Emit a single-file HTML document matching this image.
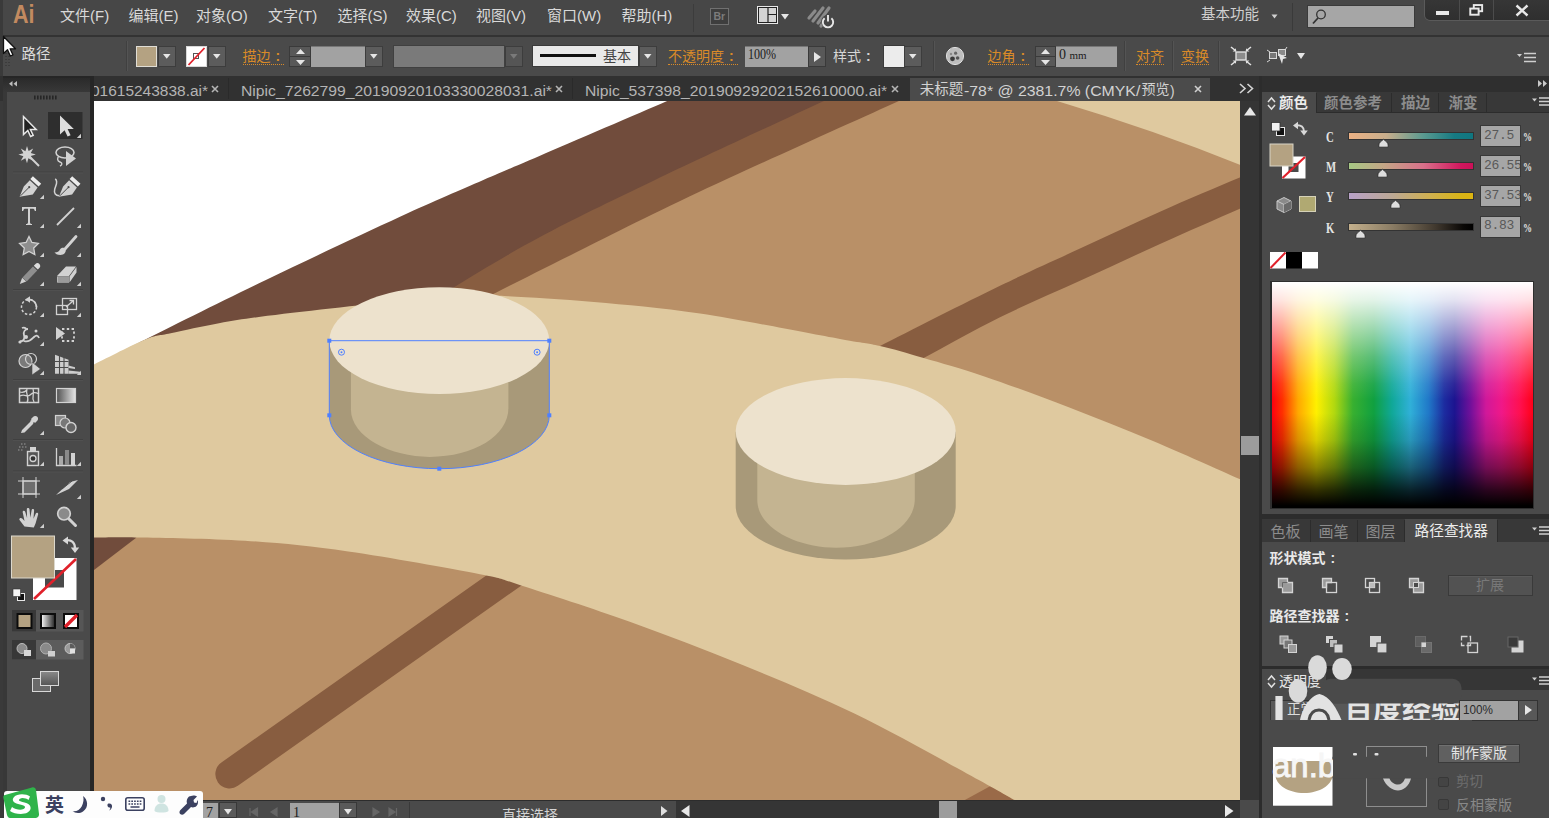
<!DOCTYPE html>
<html lang="zh"><head><meta charset="utf-8"><title>Adobe Illustrator</title>
<style>
html,body{margin:0;padding:0}
body{width:1549px;height:818px;overflow:hidden;position:relative;background:#474747;font-family:"Liberation Sans","Noto Sans CJK SC",sans-serif;}
.a{position:absolute}
.t{position:absolute;white-space:nowrap;display:flex;align-items:center;line-height:1;font-family:"Liberation Sans","Noto Sans CJK SC",sans-serif}
.t svg{display:block;flex:none}
svg{overflow:visible}

</style></head>
<body>
<svg class="a" style="left:94px;top:101px;overflow:hidden" width="1146" height="699" viewBox="94 101 1146 699">
<rect x="94" y="101" width="1146" height="699" fill="#fff"/>
<path fill="#714c3c" d="M120.0 352.5C124.2 350.4 120.6 351.8 144.9 339.7C169.2 327.6 223.4 300.5 265.9 280.0C308.4 259.5 363.8 233.5 400.0 216.8C436.2 200.1 460.0 190.2 483.3 180.0C506.6 169.8 509.2 168.9 540.0 155.7C570.8 142.5 641.1 112.2 667.8 100.7C694.5 89.2 694.6 89.3 700.0 87.0L1300 80L1300 900L40 900L40 392Z"/>
<path fill="#885d40" d="M430.0 303.0C434.3 300.2 437.7 297.0 456.0 286.0C474.3 275.0 506.8 254.7 540.0 237.0C573.2 219.3 607.7 202.7 655.0 180.0C702.3 157.3 789.8 116.8 824.0 101.0C858.2 85.2 854.0 87.7 860.0 85.0L1300 80L1300 900L300 900Z"/>
<path fill="#b99067" d="M470.0 306.0C474.5 303.7 480.0 300.8 496.8 292.3C513.6 283.8 537.1 271.8 571.0 255.0C604.9 238.2 645.2 217.3 700.0 191.6C754.8 165.9 860.3 118.5 899.5 100.7C938.7 82.9 929.1 87.6 935.0 85.0L1300 80L1300 900L40 900L40 500L470 500Z"/>
<path fill="#714c3c" d="M80 530L136.5 537.4L93.5 570.4L80 580Z"/>
<path fill="#9a6a48" d="M963 801L991 785.8L1030 810L963 810Z"/>
<path fill="#dfc99f" d="M1056 100.7Q1153.7 130 1239.8 164.7L1300 190L1300 80L1056 80Z"/>
<path fill="#885d40" d="M1290.0 156.5C1281.6 160.0 1261.5 168.4 1239.8 177.6C1218.1 186.8 1186.6 199.9 1160.0 211.7C1133.4 223.5 1106.7 236.2 1080.0 248.6C1053.3 260.9 1033.3 269.6 1000.0 285.8C966.7 302.0 906.7 332.5 880.0 346.0C853.3 359.5 846.7 363.5 840.0 367.0L860.0 392.0C870.6 386.3 900.4 370.4 923.7 358.0C947.0 345.6 974.0 330.2 1000.0 317.3C1026.0 304.4 1053.3 293.0 1080.0 280.8C1106.7 268.6 1133.4 256.0 1160.0 244.0C1186.6 232.0 1218.1 218.2 1239.8 208.7C1261.5 199.2 1281.6 190.6 1290.0 187.0Z"/>
<path stroke="#885d40" stroke-width="28.5" stroke-linecap="round" fill="none" d="M229.6 774.2L525 565.5"/>
<path fill="#dfc99f" d="M60.0 382.0C65.6 379.1 79.3 371.8 93.5 364.7C107.7 357.6 132.0 344.9 144.9 339.7C157.8 334.5 158.3 336.0 170.7 333.3C183.0 330.6 202.9 326.2 219.0 323.3C235.1 320.4 247.3 318.5 267.5 315.8C287.7 313.1 314.6 310.2 340.0 307.4C365.4 304.6 398.3 300.9 420.0 299.0C441.7 297.1 455.3 296.5 470.0 296.0C484.7 295.5 487.3 295.2 508.0 296.2C528.7 297.2 562.0 299.1 594.0 302.0C626.0 304.9 659.0 307.4 700.0 313.6C741.0 319.8 810.0 333.6 840.0 339.0C870.0 344.4 866.0 342.8 880.0 346.0C894.0 349.2 906.3 352.9 923.7 358.0C941.1 363.1 960.2 368.2 984.4 376.4C1008.6 384.6 1040.6 396.5 1068.7 407.3C1096.8 418.1 1124.5 429.1 1153.0 441.0C1181.5 452.9 1218.3 469.7 1239.5 479.0C1260.7 488.3 1273.2 494.0 1280.0 497.0L1300 510L1300 830L1050.0 820.0C1044.2 816.7 1029.3 808.2 1015.4 800.4C1001.5 792.6 993.6 787.9 966.8 773.4C940.0 758.9 891.9 731.6 854.4 713.5C816.9 695.4 779.4 680.1 742.0 664.8C704.6 649.5 666.6 635.0 629.8 621.8C593.0 608.6 546.2 593.4 521.2 585.5C496.2 577.6 508.8 579.9 480.0 574.2C451.2 568.5 387.4 557.1 348.2 551.5C309.0 545.9 280.3 543.1 245.0 540.7C209.7 538.4 161.8 537.9 136.5 537.4C111.2 536.9 106.2 537.5 93.5 537.6C80.8 537.7 65.6 537.9 60.0 538.0Z"/>
<path fill="#a89979" d="M329.3 340.7L329.3 415.3A110.0 53.4 0 0 0 549.3 415.3L549.3 340.7Z"/><path fill="#c4b491" d="M350.9 340.7L350.9 409.3C350.9 437.3 390.9 456.9 429.6 456.9C474.4 456.9 508.4 435.3 508.4 408.3L508.4 340.7Z"/><ellipse cx="439.3" cy="340.7" rx="110.0" ry="53.4" fill="#ede2cd"/><path fill="none" stroke="#4f80ff" stroke-width="1" d="M329.3 340.7L329.3 415.3A110.0 53.4 0 0 0 549.3 415.3L549.3 340.7Z"/><rect x="327.3" y="338.7" width="4" height="4" fill="#4f80ff"/><rect x="547.3" y="338.7" width="4" height="4" fill="#4f80ff"/><rect x="327.3" y="413.3" width="4" height="4" fill="#4f80ff"/><rect x="547.3" y="413.3" width="4" height="4" fill="#4f80ff"/><rect x="437.3" y="466.7" width="4" height="4" fill="#4f80ff"/><circle cx="341.5" cy="352.2" r="3" fill="none" stroke="#4f80ff" stroke-width="1"/><circle cx="341.5" cy="352.2" r="1" fill="#4f80ff"/><circle cx="537.1" cy="352.2" r="3" fill="none" stroke="#4f80ff" stroke-width="1"/><circle cx="537.1" cy="352.2" r="1" fill="#4f80ff"/>
<path fill="#a89979" d="M735.7 431.5L735.7 506.1A110.0 53.4 0 0 0 955.7 506.1L955.7 431.5Z"/><path fill="#c4b491" d="M757.3 431.5L757.3 500.1C757.3 528.1 797.3 547.7 836.1 547.7C880.8 547.7 914.8 526.1 914.8 499.1L914.8 431.5Z"/><ellipse cx="845.7" cy="431.5" rx="110.0" ry="53.4" fill="#ede2cd"/>
</svg>
<div class="a" style="left:0;top:0;width:1549px;height:35px;background:#474747"></div>
<div class="a" style="left:0;top:35px;width:1549px;height:1.500px;background:#333"></div><div class="a" style="left:0;top:36.500px;width:1549px;height:1px;background:#525252"></div>
<div class="a" style="left:0;top:37px;width:1549px;height:39px;background:#4a4a4a"></div>
<div class="a" style="left:0;top:0;width:3px;height:818px;background:#3a3a3a"></div>
<div class="a" style="left:13px;top:0px;font-size:25px;font-weight:bold;color:#c28a60;line-height:29px;transform:scaleX(.86);transform-origin:0 0;letter-spacing:0">Ai</div>
<div class="t" style="left:60px;top:6.2px;font-size:15px;height:18.0px;color:#d9d9d9;"><span>文件</span><span>(F)</span></div>
<div class="t" style="left:128.5px;top:6.2px;font-size:15px;height:18.0px;color:#d9d9d9;"><span>编辑</span><span>(E)</span></div>
<div class="t" style="left:196px;top:6.2px;font-size:15px;height:18.0px;color:#d9d9d9;"><span>对象</span><span>(O)</span></div>
<div class="t" style="left:268px;top:6.2px;font-size:15px;height:18.0px;color:#d9d9d9;"><span>文字</span><span>(T)</span></div>
<div class="t" style="left:337.5px;top:6.2px;font-size:15px;height:18.0px;color:#d9d9d9;"><span>选择</span><span>(S)</span></div>
<div class="t" style="left:406px;top:6.2px;font-size:15px;height:18.0px;color:#d9d9d9;"><span>效果</span><span>(C)</span></div>
<div class="t" style="left:476px;top:6.2px;font-size:15px;height:18.0px;color:#d9d9d9;"><span>视图</span><span>(V)</span></div>
<div class="t" style="left:547px;top:6.2px;font-size:15px;height:18.0px;color:#d9d9d9;"><span>窗口</span><span>(W)</span></div>
<div class="t" style="left:621.5px;top:6.2px;font-size:15px;height:18.0px;color:#d9d9d9;"><span>帮助</span><span>(H)</span></div>
<div class="a" style="left:693px;top:4px;width:1px;height:28px;background:#3c3c3c"></div>
<div class="a" style="left:709.500px;top:7.500px;width:19.500px;height:17px;border:1px solid #707070;background:#3e3e3e;box-sizing:border-box;color:#7c7c7c;font-size:10.500px;font-weight:bold;line-height:15px;text-align:center">Br</div>
<svg class="a" style="left:757px;top:6px" width="34" height="19" viewBox="0 0 34 19"><rect x="0.5" y="0.5" width="20" height="17" fill="#d4d4d4" stroke="#e8e8e8"/><rect x="1.5" y="1.5" width="18" height="15" fill="none" stroke="#222"/><path d="M11 2V16M11 8.5H19" stroke="#222" stroke-width="1.2"/><path d="M24 8h8l-4 5.5z" fill="#e6e6e6"/></svg>
<svg class="a" style="left:807px;top:5px" width="30" height="24" viewBox="0 0 30 24"><path d="M2 13L8 6M6 16L16 3M11 18L22 3M14 21L18 14" stroke="#8a8a8a" stroke-width="3.2" stroke-linecap="round"/><circle cx="21" cy="16.5" r="6.8" fill="#474747"/><path d="M17.6 13.2A5.2 5.2 0 1 0 24.4 13.2" fill="none" stroke="#e8e8e8" stroke-width="1.9"/><path d="M21 10V16.5" stroke="#e8e8e8" stroke-width="1.9"/></svg>
<div class="t" style="left:1201px;top:6px;font-size:14.5px;height:17.4px;color:#d0d0d0;"><span>基本功能</span></div>
<svg class="a" style="left:1271px;top:14px" width="8" height="6"><path d="M0.5 0.5h6l-3 4z" fill="#d0d0d0"/></svg>
<div class="a" style="left:1292px;top:3px;width:1px;height:28px;background:#3a3a3a"></div>
<div class="a" style="left:1308px;top:6px;width:106px;height:21px;background:#a6a6a6;box-shadow:0 0 0 1px #3a3a3a"></div>
<svg class="a" style="left:1311px;top:8px" width="18" height="18" viewBox="0 0 18 18"><circle cx="10" cy="6.5" r="4.3" fill="none" stroke="#333" stroke-width="1.3"/><path d="M7 10L2 15.5" stroke="#333" stroke-width="1.8"/></svg>
<div class="a" style="left:1425px;top:0;width:124px;height:20px;background:linear-gradient(180deg,#363636,#2f2f2f);border-radius:0 0 0 5px;box-shadow:0 1px 0 #5a5a5a,-1px 0 0 #5a5a5a"></div>
<div class="a" style="left:1459px;top:0;width:1px;height:20px;background:#4c4c4c"></div><div class="a" style="left:1493px;top:0;width:1px;height:20px;background:#4c4c4c"></div>
<div class="a" style="left:1436px;top:11px;width:13px;height:4px;background:#e8e8e8"></div>
<svg class="a" style="left:1468.800px;top:4px" width="14.500" height="12.300" viewBox="0 0 16 14"><rect x="5.2" y="1.2" width="9.5" height="7" fill="none" stroke="#e8e8e8" stroke-width="2.2"/><rect x="1.2" y="5.2" width="9.5" height="7" fill="#303030" stroke="#e8e8e8" stroke-width="2.2"/></svg>
<svg class="a" style="left:1515px;top:4px" width="14" height="13" viewBox="0 0 14 13"><path d="M1.5 1.5L12.5 11.5M12.5 1.5L1.5 11.5" stroke="#e8e8e8" stroke-width="2.4"/></svg>
<svg class="a" style="left:5px;top:44px" width="6" height="24"><path d="M1 0v24M4 0v24" stroke="#2f2f2f" stroke-width="1" stroke-dasharray="1 2"/></svg>
<div class="t" style="left:21.5px;top:45.5px;font-size:14.5px;height:17.4px;color:#dcdcdc;"><span>路径</span></div>
<div class="a" style="left:126px;top:41px;width:1px;height:30px;background:#404040"></div><div class="a" style="left:127px;top:41px;width:1px;height:30px;background:#545454"></div>
<div class="a" style="left:136px;top:46px;width:21px;height:21px;background:#b4a282;box-sizing:border-box;border:1px solid #e0ddd5"></div>
<div class="a" style="left:157.5px;top:46px;width:18px;height:21px;background:#5c5c5c;box-shadow:inset 0 0 0 1px #3d3d3d"></div><svg class="a" style="left:162.75px;top:54.2px" width="8" height="5"><path d="M0 0h7.500l-3.750 4.800z" fill="#e6e6e6"/></svg>
<svg class="a" style="left:186px;top:46px" width="21" height="21" viewBox="0 0 21 21"><rect width="21" height="21" fill="#fff"/><rect x="7.5" y="7.5" width="5" height="5" fill="none" stroke="#555"/><path d="M2.5 19L18.5 2" stroke="#e0202a" stroke-width="1.8"/><rect x=".5" y=".5" width="20" height="20" fill="none" stroke="#d8d8d8"/></svg>
<div class="a" style="left:207.5px;top:46px;width:18px;height:21px;background:#5c5c5c;box-shadow:inset 0 0 0 1px #3d3d3d"></div><svg class="a" style="left:212.75px;top:54.2px" width="8" height="5"><path d="M0 0h7.500l-3.750 4.800z" fill="#e6e6e6"/></svg>
<div class="t" style="left:242.5px;top:47.5px;font-size:14px;height:16.8px;color:#d98a28;border-bottom:1px dotted #d98a28;"><span>描边</span><span style="margin-left:4.9px;margin-right:4.2px;font-weight:bold">:</span></div>
<div class="a" style="left:289px;top:46px;width:22px;height:21px;background:#585858;box-shadow:inset 0 0 0 1px #3a3a3a"></div><div class="a" style="left:289px;top:56.0px;width:22px;height:1px;background:#3a3a3a"></div><svg class="a" style="left:295.5px;top:48.5px" width="9" height="16"><path d="M0 5h9l-4.5-5zM0 11h9l-4.5 5z" fill="#e6e6e6"/></svg>
<div class="a" style="left:311px;top:46px;width:54px;height:21px;background:#a2a2a2;box-shadow:inset 0 1px 0 #777"></div>
<div class="a" style="left:365px;top:46px;width:18px;height:21px;background:#5c5c5c;box-shadow:inset 0 0 0 1px #3d3d3d"></div><svg class="a" style="left:370.25px;top:54.2px" width="8" height="5"><path d="M0 0h7.500l-3.750 4.800z" fill="#e6e6e6"/></svg>
<div class="a" style="left:394px;top:46px;width:110px;height:21px;background:#7a7a7a;box-shadow:0 0 0 1px #404040"></div>
<div class="a" style="left:504.5px;top:46px;width:18px;height:21px;background:#555;box-shadow:inset 0 0 0 1px #3d3d3d"></div><svg class="a" style="left:509.75px;top:54.2px" width="8" height="5"><path d="M0 0h7.500l-3.750 4.800z" fill="#7a7a7a"/></svg>
<div class="a" style="left:533px;top:46px;width:105px;height:20px;background:#e9e9e9;box-shadow:0 0 0 1px #3a3a3a"></div>
<div class="a" style="left:540px;top:54px;width:56px;height:3px;background:#111"></div>
<div class="t" style="left:603px;top:47.5px;font-size:14px;height:16.8px;color:#444;"><span>基本</span></div>
<div class="a" style="left:639px;top:46px;width:18px;height:21px;background:#5c5c5c;box-shadow:inset 0 0 0 1px #3d3d3d"></div><svg class="a" style="left:644.25px;top:54.2px" width="8" height="5"><path d="M0 0h7.500l-3.750 4.800z" fill="#e6e6e6"/></svg>
<div class="t" style="left:668px;top:47.5px;font-size:14px;height:16.8px;color:#d98a28;border-bottom:1px dotted #d98a28;"><span>不透明度</span><span style="margin-left:4.9px;margin-right:4.2px;font-weight:bold">:</span></div>
<div class="a" style="left:745px;top:46px;width:63px;height:21px;background:#a2a2a2;box-shadow:inset 0 1px 0 #777"></div>
<div class="a" style="left:748px;top:46.5px;font-size:14px;color:#1c1c1c;line-height:16px;font-family:'Liberation Serif',serif;transform:scaleX(.86);transform-origin:0 0">100%</div>
<div class="a" style="left:808px;top:46px;width:18px;height:21px;background:#585858;box-shadow:inset 0 0 0 1px #3a3a3a"></div><svg class="a" style="left:814px;top:52px" width="7" height="10"><path d="M0 0v10l7-5z" fill="#e6e6e6"/></svg>
<div class="t" style="left:833px;top:47.5px;font-size:14px;height:16.8px;color:#d6d6d6;"><span>样式</span><span style="margin-left:4.9px;margin-right:4.2px;font-weight:bold">:</span></div>
<div class="a" style="left:883.5px;top:46px;width:20px;height:21px;background:#ececec;box-shadow:0 0 0 1px #3a3a3a"></div>
<div class="a" style="left:904px;top:46px;width:18px;height:21px;background:#5c5c5c;box-shadow:inset 0 0 0 1px #3d3d3d"></div><svg class="a" style="left:909.25px;top:54.2px" width="8" height="5"><path d="M0 0h7.500l-3.750 4.800z" fill="#e6e6e6"/></svg>
<div class="a" style="left:933px;top:41px;width:1px;height:30px;background:#404040"></div><div class="a" style="left:934px;top:41px;width:1px;height:30px;background:#545454"></div>
<svg class="a" style="left:945px;top:46px" width="20" height="20" viewBox="0 0 20 20"><circle cx="10" cy="10" r="8.6" fill="#bdbdbd" stroke="#e0e0e0" stroke-width="1"/><circle cx="7.5" cy="12.8" r="2.4" fill="#3a3a3a"/><circle cx="12.6" cy="12" r="1.8" fill="#555"/><circle cx="10.6" cy="7.2" r="1.6" fill="#666"/><circle cx="6" cy="8" r="1.2" fill="#888"/></svg>
<div class="t" style="left:987.5px;top:47.5px;font-size:14px;height:16.8px;color:#d98a28;border-bottom:1px dotted #d98a28;"><span>边角</span><span style="margin-left:4.9px;margin-right:4.2px;font-weight:bold">:</span></div>
<div class="a" style="left:1035px;top:46px;width:20.5px;height:21px;background:#585858;box-shadow:inset 0 0 0 1px #3a3a3a"></div><div class="a" style="left:1035px;top:56.0px;width:20.5px;height:1px;background:#3a3a3a"></div><svg class="a" style="left:1040.75px;top:48.5px" width="9" height="16"><path d="M0 5h9l-4.5-5zM0 11h9l-4.5 5z" fill="#e6e6e6"/></svg>
<div class="a" style="left:1055.5px;top:46px;width:61px;height:21px;background:#a2a2a2;box-shadow:inset 0 1px 0 #777"></div>
<div class="a" style="left:1059px;top:46.5px;font-size:14px;color:#1c1c1c;line-height:16px;font-family:'Liberation Serif',serif">0 <span style="font-size:11px">mm</span></div>
<div class="a" style="left:1124px;top:41px;width:1px;height:30px;background:#404040"></div><div class="a" style="left:1125px;top:41px;width:1px;height:30px;background:#545454"></div>
<div class="t" style="left:1136px;top:47.5px;font-size:14px;height:16.8px;color:#d98a28;border-bottom:1px dotted #d98a28;"><span>对齐</span></div>
<div class="a" style="left:1172px;top:41px;width:1px;height:30px;background:#404040"></div><div class="a" style="left:1173px;top:41px;width:1px;height:30px;background:#545454"></div>
<div class="t" style="left:1181px;top:47.5px;font-size:14px;height:16.8px;color:#d98a28;border-bottom:1px dotted #d98a28;"><span>变换</span></div>
<div class="a" style="left:1218px;top:41px;width:1px;height:30px;background:#404040"></div><div class="a" style="left:1219px;top:41px;width:1px;height:30px;background:#545454"></div>
<svg class="a" style="left:1230px;top:46px" width="22" height="20" viewBox="0 0 22 20"><rect x="6" y="6" width="10" height="8" fill="#8c8c8c" stroke="#e2e2e2" stroke-width="1.4"/><path d="M1 1l5 4M21 1l-5 4M1 19l5-4M21 19l-5-4" stroke="#e2e2e2" stroke-width="1.6"/><path d="M6 2.2v3.3H2.6zM16 2.2v3.3h3.4zM6 17.8v-3.3H2.6zM16 17.8v-3.3h3.4z" fill="#e2e2e2"/></svg>
<svg class="a" style="left:1267px;top:46px" width="40" height="20" viewBox="0 0 40 20"><rect x="2.5" y="6.5" width="7" height="6" fill="#777" stroke="#d8d8d8"/><rect x="11.5" y="3.5" width="7" height="6" fill="#8a8a8a" stroke="#d8d8d8"/><path d="M11 7l9 5-4 1-1 5z" fill="#e6e6e6"/><path d="M0 4l3 2M20 1l-2 3M0 16l3-2" stroke="#d8d8d8"/><path d="M30 7h8l-4 6z" fill="#e6e6e6"/></svg>
<svg class="a" style="left:1517px;top:52px" width="19" height="11" viewBox="0 0 19 11"><path d="M0 2h5l-2.500 3z" fill="#cfcfcf"/><path d="M7 1.500h12M7 5.500h12M7 9.500h12" stroke="#cfcfcf" stroke-width="1.600"/></svg>
<div class="a" style="left:0;top:76px;width:1549px;height:25px;background:#313131"></div>
<div class="a" style="left:94px;top:76px;width:130px;height:25px;overflow:hidden"><svg class="a" style="left:-3.5px;top:3.8px;" width="117" height="20.15"><text x="0" y="15.5" font-family="'Liberation Sans',sans-serif" font-size="15.5" font-weight="normal" fill="#b4b4b4" textLength="117" lengthAdjust="spacingAndGlyphs">01615243838.ai*</text></svg></div>
<svg class="a" style="left:211px;top:85px" width="8" height="8"><path d="M1 1l6 6M7 1l-6 6" stroke="#b4b4b4" stroke-width="1.600"/></svg>
<div class="a" style="left:228px;top:78px;width:1px;height:21px;background:#2a2a2a"></div>
<svg class="a" style="left:241px;top:79.8px;" width="311" height="20.15"><text x="0" y="15.5" font-family="'Liberation Sans',sans-serif" font-size="15.5" font-weight="normal" fill="#b4b4b4" textLength="311" lengthAdjust="spacingAndGlyphs">Nipic_7262799_20190920103330028031.ai*</text></svg>
<svg class="a" style="left:555px;top:85px" width="8" height="8"><path d="M1 1l6 6M7 1l-6 6" stroke="#b4b4b4" stroke-width="1.600"/></svg>
<div class="a" style="left:572px;top:78px;width:1px;height:21px;background:#2a2a2a"></div>
<svg class="a" style="left:585px;top:79.8px;" width="302" height="20.15"><text x="0" y="15.5" font-family="'Liberation Sans',sans-serif" font-size="15.5" font-weight="normal" fill="#b4b4b4" textLength="302" lengthAdjust="spacingAndGlyphs">Nipic_537398_20190929202152610000.ai*</text></svg>
<svg class="a" style="left:891px;top:85px" width="8" height="8"><path d="M1 1l6 6M7 1l-6 6" stroke="#b4b4b4" stroke-width="1.600"/></svg>
<div class="a" style="left:910px;top:78px;width:300px;height:23px;background:#4b4b4b"></div>
<div class="t" style="left:919.7px;top:80.8px;font-size:14.5px;height:17.4px;color:#d2d2d2;"><span>未标题</span></div>
<svg class="a" style="left:964.2px;top:79.8px;" width="176.3" height="20.15"><text x="0" y="15.5" font-family="'Liberation Sans',sans-serif" font-size="15.5" font-weight="normal" fill="#d2d2d2" textLength="176.3" lengthAdjust="spacingAndGlyphs">-78* @ 2381.7% (CMYK/</text></svg>
<div class="t" style="left:1141.5px;top:80.8px;font-size:14px;height:16.8px;color:#d2d2d2;"><span>预览</span></div>
<svg class="a" style="left:1169.8px;top:79.8px;" width="4.6" height="20.15"><text x="0" y="15.5" font-family="'Liberation Sans',sans-serif" font-size="15.5" font-weight="normal" fill="#d2d2d2" textLength="4.6" lengthAdjust="spacingAndGlyphs">)</text></svg>
<svg class="a" style="left:1193.5px;top:85px" width="8" height="8"><path d="M1 1l6 6M7 1l-6 6" stroke="#d0d0d0" stroke-width="1.600"/></svg>
<svg class="a" style="left:1238.500px;top:83px" width="15" height="11" viewBox="0 0 15 11"><path d="M1 1l5 4.500-5 4.500M8.500 1l5 4.500-5 4.500" fill="none" stroke="#d4d4d4" stroke-width="1.600"/></svg>
<svg class="a" style="left:2px;top:35px" width="14" height="23" viewBox="0 0 14 23"><path d="M1.500 1.500v17l4-3.800 2.800 6.300 2.600-1.200-2.800-6h5.400z" fill="#fff" stroke="#111" stroke-width="1.300" stroke-linejoin="round"/></svg>
<div class="a" style="left:3px;top:76px;width:91px;height:742px;background:#262626"></div>
<div class="a" style="left:3px;top:91px;width:3.500px;height:727px;background:#383838"></div>
<div class="a" style="left:6.500px;top:91px;width:83px;height:727px;background:#4a4a4a"></div>
<div class="a" style="left:3px;top:78px;width:87px;height:14px;background:linear-gradient(180deg,#2a2a2a,#383838)"></div>
<svg class="a" style="left:8.500px;top:81px" width="9" height="6"><path d="M3.500 0v5.500L0 2.750zM8 0v5.500L4.500 2.750z" fill="#bdbdbd"/></svg>
<svg class="a" style="left:34px;top:95px" width="24" height="5"><path d="M0 2.500h24" stroke="#262626" stroke-width="4" stroke-dasharray="1.600 1.400"/></svg>
<svg class="a" style="left:0;top:100px" width="94" height="600" viewBox="0 100 94 600"><path d="M13 172H83" stroke="#404040" stroke-width="1"/><path d="M13 173H83" stroke="#505050" stroke-width="1"/><path d="M13 289.500H83" stroke="#404040" stroke-width="1"/><path d="M13 290.500H83" stroke="#505050" stroke-width="1"/><path d="M13 379.500H83" stroke="#404040" stroke-width="1"/><path d="M13 380.500H83" stroke="#505050" stroke-width="1"/><path d="M13 439.500H83" stroke="#404040" stroke-width="1"/><path d="M13 440.500H83" stroke="#505050" stroke-width="1"/><path d="M13 471H83" stroke="#404040" stroke-width="1"/><path d="M13 472H83" stroke="#505050" stroke-width="1"/><rect x="48" y="112" width="34.500" height="27" fill="#2e2e2e"/><path d="M23.500 116.500v18l4.300-4 2.800 6 2.600-1.200-2.800-5.800h5.800z" fill="#222" stroke="#e8e8e8" stroke-width="1.500" stroke-linejoin="miter"/><path d="M60 115.500v19l4.600-4.200 3 6.300 3-1.400-3-6.200h6.200z" fill="#dcdcdc"/><path d="M81 138v-4.200h-0.0l-4.200 4.200z" fill="#cfcfcf"/><path d="M27 146l1.600 5 4.600-2.600-2.400 4.600 5 1.600-5 1.400 2.200 4.800-4.600-2.600-1.400 5-1.600-5-4.600 2.600 2.600-4.600-5-1.600 5-1.400-2.600-4.800 4.600 2.800z" fill="#d2d2d2"/><path d="M30 157l9 9" stroke="#d2d2d2" stroke-width="2"/><ellipse cx="65" cy="152.500" rx="9" ry="5.500" fill="none" stroke="#d2d2d2" stroke-width="1.600"/><path d="M59 156c-2 2-2 5 1 6s2 3 0 4" fill="none" stroke="#d2d2d2" stroke-width="1.400"/><path d="M66 151v15l10-7.500z" fill="#d2d2d2"/><g transform="translate(0 0)"><path d="M19.600 196.800L23.800 186.500 29.800 180.300 37.600 187.500 32.800 194.500z" fill="#d2d2d2"/><path d="M30.300 179.100l2.600-2.900 8.300 7.500-2.600 2.900z" fill="#ececec"/><path d="M20.600 195.800L28.600 187.800" stroke="#4a4a4a" stroke-width="1"/><circle cx="29.200" cy="187.200" r="1.100" fill="#4a4a4a"/></g><path d="M44 199v-4.200h-0.0l-4.200 4.200z" fill="#cfcfcf"/><path d="M55.200 178.800c3.500 2.500 .5 6.500-.5 10.500s1 6.500 4.500 6.500" fill="none" stroke="#d2d2d2" stroke-width="1.500"/><g transform="translate(39.3 0)"><path d="M19.600 196.800L23.800 186.500 29.800 180.300 37.600 187.500 32.800 194.500z" fill="#d2d2d2"/><path d="M30.300 179.100l2.600-2.900 8.300 7.500-2.600 2.900z" fill="#ececec"/><path d="M20.600 195.800L28.600 187.800" stroke="#4a4a4a" stroke-width="1"/><circle cx="29.200" cy="187.200" r="1.100" fill="#4a4a4a"/></g><path d="M22 207h14v4h-1.200c-.3-1.600-.8-2.200-2.600-2.200H30v13.400c0 1.400.5 1.600 2 1.800v1h-6v-1c1.500-.2 2-.4 2-1.800V208.800h-2.200c-1.800 0-2.300.6-2.600 2.200H22z" fill="#d2d2d2"/><path d="M44 228v-4.200h-0.0l-4.200 4.200z" fill="#cfcfcf"/><path d="M57 225l17-17" stroke="#d2d2d2" stroke-width="1.800"/><path d="M81 228v-4.200h-0.0l-4.200 4.200z" fill="#cfcfcf"/><path d="M29 236.500l2.900 6 6.500.9-4.700 4.600 1.100 6.500-5.800-3.100-5.800 3.100 1.100-6.500-4.700-4.600 6.500-.9z" fill="#8e8e8e" stroke="#d2d2d2" stroke-width="1.300"/><path d="M44 257v-4.200h-0.0l-4.200 4.200z" fill="#cfcfcf"/><path d="M76 236.500l-11 12.500" stroke="#d2d2d2" stroke-width="2.800" stroke-linecap="round"/><path d="M54.500 252.500c3 0 4.500-1 5.500-3s4.500-2.500 5.500 0-1.500 5.500-5 5.500-5-1.500-6-2.500z" fill="#d2d2d2"/><path d="M81 257v-4.200h-0.0l-4.200 4.200z" fill="#cfcfcf"/><path d="M22.500 277.500l10.500-11 4.200 4-10.500 11z" fill="#8e8e8e"/><path d="M33.800 265.700l1.700-1.800c1.100-1.100 2.800-1.100 3.900 0s1.100 2.700.1 3.900l-1.700 1.800z" fill="#dcdcdc"/><path d="M19.800 284l2.400-6.200 4 3.800z" fill="#d0d0d0"/><path d="M44 286v-4.200h-0.0l-4.200 4.200z" fill="#cfcfcf"/><path d="M57 276l9-9.500h10l-7 9.500zM57 276.500h12v6H57zM69.500 276.500l7-9.500v5.500l-7 10z" fill="#d2d2d2"/><path d="M57.500 277h11.500v5.500H57.500z" fill="#9a9a9a"/><path d="M81 286v-4.200h-0.0l-4.200 4.200z" fill="#cfcfcf"/><circle cx="29" cy="307" r="7.500" fill="none" stroke="#d2d2d2" stroke-width="1.500" stroke-dasharray="2.500 2"/><path d="M29 299.500a7.500 7.500 0 0 1 7.500 7.500" fill="none" stroke="#d2d2d2" stroke-width="1.600"/><path d="M25 299.500l5-3.300v6.600z" fill="#d2d2d2"/><path d="M44 317v-4.200h-0.0l-4.200 4.200z" fill="#cfcfcf"/><rect x="56.500" y="305.500" width="11" height="9" fill="none" stroke="#d2d2d2" stroke-width="1.300"/><rect x="62.500" y="298.500" width="14" height="11" fill="none" stroke="#d2d2d2" stroke-width="1.300"/><path d="M66 307l7-6M69.500 300.500h4v4" fill="none" stroke="#d2d2d2" stroke-width="1.300"/><path d="M81 317v-4.200h-0.0l-4.200 4.200z" fill="#cfcfcf"/><path d="M20 341c4 1 5-3 4-6s1-6 4-6M24 341c5 2 8-2 10-4s4-2 5 1M22 328c2-1 4 0 5 2" fill="none" stroke="#d2d2d2" stroke-width="1.800"/><circle cx="26" cy="337" r="2" fill="#d2d2d2"/><circle cx="20" cy="342" r="1.600" fill="#d2d2d2"/><circle cx="36" cy="331" r="1.500" fill="#d2d2d2"/><path d="M44 346v-4.200h-0.0l-4.200 4.200z" fill="#cfcfcf"/><rect x="62" y="329" width="12" height="12" fill="none" stroke="#d2d2d2" stroke-width="1.800" stroke-dasharray="2.400 2.400"/><path d="M56 327v13l9-6.500z" fill="#d2d2d2"/><circle cx="25.500" cy="361" r="6.500" fill="#7a7a7a" stroke="#d2d2d2" stroke-width="1.200"/><circle cx="31" cy="359" r="5.500" fill="none" stroke="#d2d2d2" stroke-width="1.200"/><path d="M32 362v13l8.500-6z" fill="#d2d2d2" stroke="#4a4a4a" stroke-width=".6"/><path d="M44 375v-4.200h-0.0l-4.200 4.200z" fill="#cfcfcf"/><path d="M55 354.700L68.500 359.700V373.800H55z" fill="#cdcdcd"/><path d="M59.500 355v19M64 357v17M55 361.500h13.500M55 367.500h13.500" stroke="#4a4a4a" stroke-width="1.100"/><path d="M68.500 365.500l6.500 1.800v1.700l-6.500-1zM68.500 370.500l11.500 1.300v2h-11.500z" fill="#cdcdcd"/><path d="M81 375v-4.200h-0.0l-4.200 4.200z" fill="#cfcfcf"/><rect x="19.500" y="388.500" width="19" height="14" fill="none" stroke="#d2d2d2" stroke-width="1.500"/><path d="M20 396c5-3 7 2 10-1s5-3 9-1M27 389c-2 5 3 8 0 14M33 389c2 4-2 8 1 13M20 392c3 1 5 0 7-2" fill="none" stroke="#d2d2d2" stroke-width="1.300"/><defs><linearGradient id="tg1" x1="0" x2="1"><stop offset="0" stop-color="#505050"/><stop offset="1" stop-color="#e6e6e6"/></linearGradient></defs><rect x="56.500" y="388.500" width="19" height="14" fill="url(#tg1)" stroke="#d2d2d2" stroke-width="1.200"/><path d="M21 433l1-3 9-9 2.500 2.500-9 9zM31 419l2-2c1-1.500 3.500-1.500 4.500 0s.5 3-.5 4l-2 2-1-1-1.500 1.500-2.500-2.500L31.500 420z" fill="#d2d2d2"/><path d="M44 435v-4.200h-0.0l-4.200 4.200z" fill="#cfcfcf"/><rect x="55.500" y="415.500" width="10" height="10" fill="#8a8a8a" stroke="#d2d2d2" stroke-width="1.200"/><circle cx="65" cy="423" r="5" fill="#777" stroke="#d2d2d2" stroke-width="1.200"/><circle cx="71" cy="427.500" r="5" fill="#666" stroke="#d2d2d2" stroke-width="1.400"/><rect x="27.500" y="451.500" width="11" height="14" fill="#555" stroke="#d2d2d2" stroke-width="1.400"/><circle cx="33" cy="458.500" r="3" fill="#333" stroke="#d2d2d2" stroke-width="1.300"/><rect x="30" y="447" width="6" height="4" fill="#d2d2d2"/><path d="M19 447h8M18 450h6M21 444h5" stroke="#9a9a9a" stroke-width="1.200" stroke-dasharray="1.500 1.500"/><path d="M44 466v-4.200h-0.0l-4.200 4.200z" fill="#cfcfcf"/><path d="M56.500 448v17.500h20" fill="none" stroke="#d2d2d2" stroke-width="1.300"/><rect x="59" y="456" width="4" height="9" fill="#aaa"/><rect x="65" y="450" width="4" height="15" fill="#8a8a8a"/><rect x="71" y="453" width="4" height="12" fill="#d2d2d2"/><path d="M81 466v-4.200h-0.0l-4.200 4.200z" fill="#cfcfcf"/><rect x="23" y="481" width="13" height="13" fill="#6e6e6e" stroke="#d2d2d2" stroke-width="1.200"/><path d="M23 477v21M36 477v21M18 481h22M18 494h22" stroke="#d2d2d2" stroke-width="1"/><path d="M56 495l14-13 8-2-9 9z" fill="#d2d2d2"/><path d="M62 489l10-8" stroke="#4a4a4a" stroke-width="1"/><path d="M81 499v-4.200h-0.0l-4.200 4.200z" fill="#cfcfcf"/><g transform="translate(0 5.500)"><path d="M24.500 521l-4.800-6.200c-1.300-1.700 1-3.300 2.500-1.800l2.300 2.400-1.800-8.600c-.4-1.700 1.900-2.300 2.500-.6l1.900 6.200-.3-8.600c0-1.800 2.500-1.800 2.700 0l.8 8.500 1.300-7.600c.3-1.700 2.600-1.400 2.500.4l-.6 8.200 2.300-5.200c.7-1.600 2.800-.7 2.300 1l-2.400 8.300c-.8 2.400-1.500 3.400-1.900 4.600z" fill="#d2d2d2"/></g><path d="M44 528v-4.200h-0.0l-4.200 4.200z" fill="#cfcfcf"/><circle cx="64" cy="513.700" r="6.300" fill="#8a8a8a" stroke="#d2d2d2" stroke-width="1.700"/><path d="M69 519l6.500 6.500" stroke="#d2d2d2" stroke-width="3" stroke-linecap="round"/></svg>
<svg class="a" style="left:0;top:530px" width="94" height="170" viewBox="0 530 94 170"><rect x="33" y="558" width="43.500" height="42" fill="#fff"/><rect x="45" y="570" width="19" height="17.500" fill="#4a4a4a"/><path d="M34 599L76 559" stroke="#e0202a" stroke-width="2.600"/><rect x="11.500" y="536" width="43" height="42" fill="#b4a282" stroke="#dcd8cc" stroke-width="1"/><path d="M66.500 540.200c5-.6 8.500 2.500 8.500 8" fill="none" stroke="#d8d8d8" stroke-width="2.200"/><path d="M62.500 540.500l5.500-4v8zM75 553l-4.200-5.500h8.400z" fill="#d8d8d8"/><rect x="17.500" y="593.500" width="7" height="7" fill="#111" stroke="#e8e8e8"/><rect x="13" y="589" width="7.500" height="7.500" fill="#f4f4f4" stroke="#333" stroke-width=".6"/><rect x="12" y="610" width="71.500" height="21.500" fill="#565656"/><rect x="12" y="610" width="24" height="21.500" fill="#383838"/><rect x="17.500" y="614" width="14" height="14" fill="#b4a282" stroke="#0c0c0c" stroke-width="2"/><defs><linearGradient id="tg2" x1="0" x2="1"><stop offset="0" stop-color="#fff"/><stop offset="1" stop-color="#222"/></linearGradient></defs><rect x="41" y="614" width="14" height="14" fill="url(#tg2)" stroke="#0c0c0c" stroke-width="2"/><rect x="64" y="614" width="14" height="14" fill="#fff" stroke="#0c0c0c" stroke-width="2"/><path d="M65 627L77 615" stroke="#e0202a" stroke-width="3.400"/><rect x="12" y="640" width="71.500" height="19.500" fill="#5c5c5c"/><rect x="12" y="640" width="24" height="19.500" fill="#383838"/><circle cx="22" cy="648.500" r="5" fill="#8a8a8a" stroke="#bdbdbd"/><rect x="24" y="650" width="7" height="6" fill="#d6d6d6"/><circle cx="46" cy="648.500" r="5.500" fill="#8a8a8a" stroke="#b0b0b0"/><rect x="48" y="651" width="7" height="5.500" fill="#cfcfcf"/><circle cx="70" cy="648.500" r="5" fill="#9a9a9a" stroke="#c4c4c4"/><path d="M70 648.500v-5a5 5 0 0 1 5 5z" fill="#5c5c5c"/><rect x="70" y="648.500" width="5" height="5" fill="#e0e0e0"/><rect x="32.500" y="678.500" width="18" height="13" fill="#6a6a6a" stroke="#d8d8d8"/><defs><linearGradient id="tg3" x1="0" x2="0" y1="0" y2="1"><stop offset="0" stop-color="#8a8a8a"/><stop offset="1" stop-color="#555"/></linearGradient></defs><rect x="40.500" y="671.500" width="18" height="14" fill="url(#tg3)" stroke="#d8d8d8"/></svg>
<div class="a" style="left:1240px;top:101px;width:19px;height:699px;background:#353535"></div>
<svg class="a" style="left:1244px;top:107px" width="12" height="9"><path d="M0 8.500h12L6 0z" fill="#e8e8e8"/></svg>
<div class="a" style="left:1241px;top:436px;width:18px;height:19px;background:#9c9c9c"></div>
<div class="a" style="left:1259px;top:76px;width:290px;height:742px;background:#2c2c2c"></div>
<div class="a" style="left:1262px;top:76px;width:287px;height:16px;background:#2f2f2f"></div>
<svg class="a" style="left:1538px;top:80px" width="11" height="8"><path d="M0 0v7l4-3.500zM5 0v7l4-3.500z" fill="#c8c8c8"/></svg>
<div class="a" style="left:1262px;top:92px;width:287px;height:422px;background:#4a4a4a"></div>
<div class="a" style="left:1316px;top:92px;width:233px;height:20px;background:#383838"></div>
<div class="a" style="left:1316px;top:93px;width:1px;height:19px;background:#2c2c2c"></div>
<div class="a" style="left:1391px;top:93px;width:1px;height:19px;background:#2c2c2c"></div>
<div class="a" style="left:1438px;top:93px;width:1px;height:19px;background:#2c2c2c"></div>
<div class="a" style="left:1486px;top:93px;width:1px;height:19px;background:#2c2c2c"></div>
<div class="a" style="left:1316px;top:112px;width:233px;height:1px;background:#2c2c2c"></div>
<svg class="a" style="left:1267px;top:97px" width="9" height="13"><path d="M1 5l3.500-4 3.500 4M1 8l3.500 4 3.500-4" fill="none" stroke="#e0e0e0" stroke-width="1.500"/></svg>
<div class="t" style="left:1279px;top:94.5px;font-size:14.5px;height:17.4px;color:#ececec;font-weight:bold;"><span>颜色</span></div>
<div class="t" style="left:1324px;top:94.5px;font-size:14.5px;height:17.4px;color:#8c8c8c;font-weight:bold;"><span>颜色参考</span></div>
<div class="t" style="left:1401px;top:94.5px;font-size:14.5px;height:17.4px;color:#8c8c8c;font-weight:bold;"><span>描边</span></div>
<div class="t" style="left:1448.5px;top:94.5px;font-size:14.5px;height:17.4px;color:#8c8c8c;font-weight:bold;"><span>渐变</span></div>
<svg class="a" style="left:1532px;top:97px" width="17" height="10" viewBox="0 0 17 10"><path d="M0 1.500h5l-2.500 3z" fill="#cfcfcf"/><path d="M7 1h10M7 4.500h10M7 8h10" stroke="#cfcfcf" stroke-width="1.500"/></svg>
<svg class="a" style="left:1270px;top:121px" width="40" height="16" viewBox="0 0 40 16"><rect x="6.500" y="6.500" width="8" height="8" fill="#111" stroke="#e8e8e8"/><rect x="1.500" y="1.500" width="8.500" height="8.500" fill="#f2f2f2" stroke="#333" stroke-width=".800"/><path d="M26.500 4.200c4.500-.5 7.500 2 7.500 6.500" fill="none" stroke="#d8d8d8" stroke-width="2"/><path d="M23 4.500l5-3.700v7.400zM34 14.500l-3.800-5h7.600z" fill="#d8d8d8"/></svg>
<svg class="a" style="left:1268px;top:142px" width="40" height="38" viewBox="1268 142 40 38"><rect x="1282" y="156.500" width="23.500" height="22" fill="#fff"/><rect x="1288.500" y="163" width="10" height="9" fill="#4a4a4a"/><path d="M1282.500 178L1305 157" stroke="#e0202a" stroke-width="2.200"/><rect x="1270" y="144" width="23" height="22" fill="#b4a282" stroke="#d8d4c6"/></svg>
<svg class="a" style="left:1276px;top:197px" width="16" height="16" viewBox="0 0 16 16"><path d="M8 .5l7 3.500v8l-7 3.500-7-3.500v-8z" fill="#8a8a8a" stroke="#c8c8c8"/><path d="M1 4l7 3.500 7-3.500M8 7.500v8" fill="none" stroke="#c8c8c8"/><path d="M8 7.500l7-3.500v8l-7 3.500z" fill="#6a6a6a"/></svg>
<div class="a" style="left:1299px;top:195.500px;width:17px;height:16.500px;background:#b0a972;box-sizing:border-box;border:1px solid #d6d2b8"></div>
<svg class="a" style="left:1270px;top:252px" width="48" height="17" viewBox="0 0 48 17"><rect width="16" height="16.500" fill="#fff"/><path d="M.5 16L15.500 .5" stroke="#e0202a" stroke-width="2"/><rect x="16" width="16" height="16.500" fill="#000"/><rect x="32" width="16" height="16.500" fill="#fff"/></svg>
<div class="a" style="left:1326px;top:129.2px;font-family:'Liberation Serif',serif;font-weight:bold;font-size:14.500px;line-height:16px;color:#e4e4e4;transform:scaleX(.74);transform-origin:0 0">C</div>
<div class="a" style="left:1349px;top:133.2px;width:123.500px;height:6px;background:linear-gradient(90deg,#ecb184,#c8ae8c 30%,#5a9a90 60%,#167a82 85%,#107680);box-shadow:0 0 0 1px #333"></div>
<svg class="a" style="left:1377.8px;top:139.4px" width="11" height="9" viewBox="0 0 11 9"><path d="M5.500 0.300C3.500 2 .8 3.500 .8 6v2.200h9.400V6c0-2.500-2.700-4-4.700-5.700z" fill="#dedede" stroke="#2a2a2a" stroke-width=".900"/></svg>
<div class="a" style="left:1481px;top:126.0px;width:39px;height:20px;background:#a6a6a6;box-shadow:0 0 0 1px #383838;overflow:hidden"><div class="a" style="left:3px;top:1.500px;font-family:'Liberation Mono',monospace;font-size:13px;line-height:16px;color:#585858;white-space:nowrap;letter-spacing:-.3px">27.5</div></div>
<div class="a" style="left:1523px;top:130.2px;font-family:'Liberation Serif',serif;font-weight:bold;font-size:12px;line-height:14px;color:#e0e0e0;transform:scaleX(.75);transform-origin:0 0">%</div>
<div class="a" style="left:1326px;top:159.2px;font-family:'Liberation Serif',serif;font-weight:bold;font-size:14.500px;line-height:16px;color:#e4e4e4;transform:scaleX(.74);transform-origin:0 0">M</div>
<div class="a" style="left:1349px;top:163.2px;width:123.500px;height:6px;background:linear-gradient(90deg,#a6c884,#c4a686 28%,#d8708a 60%,#d0185e 90%,#cc1058);box-shadow:0 0 0 1px #333"></div>
<svg class="a" style="left:1376.5px;top:169.4px" width="11" height="9" viewBox="0 0 11 9"><path d="M5.500 0.300C3.500 2 .8 3.500 .8 6v2.200h9.400V6c0-2.500-2.700-4-4.700-5.700z" fill="#dedede" stroke="#2a2a2a" stroke-width=".900"/></svg>
<div class="a" style="left:1481px;top:156.0px;width:39px;height:20px;background:#a6a6a6;box-shadow:0 0 0 1px #383838;overflow:hidden"><div class="a" style="left:3px;top:1.500px;font-family:'Liberation Mono',monospace;font-size:13px;line-height:16px;color:#585858;white-space:nowrap;letter-spacing:-.3px">26.55</div></div>
<div class="a" style="left:1523px;top:160.2px;font-family:'Liberation Serif',serif;font-weight:bold;font-size:12px;line-height:14px;color:#e0e0e0;transform:scaleX(.75);transform-origin:0 0">%</div>
<div class="a" style="left:1326px;top:189.4px;font-family:'Liberation Serif',serif;font-weight:bold;font-size:14.500px;line-height:16px;color:#e4e4e4;transform:scaleX(.74);transform-origin:0 0">Y</div>
<div class="a" style="left:1349px;top:193.4px;width:123.500px;height:6px;background:linear-gradient(90deg,#b8a2c8,#bca894 35%,#cfb050 65%,#d8b418 90%,#dcb410);box-shadow:0 0 0 1px #333"></div>
<svg class="a" style="left:1389.8px;top:199.6px" width="11" height="9" viewBox="0 0 11 9"><path d="M5.500 0.300C3.500 2 .8 3.500 .8 6v2.200h9.400V6c0-2.500-2.700-4-4.700-5.700z" fill="#dedede" stroke="#2a2a2a" stroke-width=".900"/></svg>
<div class="a" style="left:1481px;top:186.2px;width:39px;height:20px;background:#a6a6a6;box-shadow:0 0 0 1px #383838;overflow:hidden"><div class="a" style="left:3px;top:1.500px;font-family:'Liberation Mono',monospace;font-size:13px;line-height:16px;color:#585858;white-space:nowrap;letter-spacing:-.3px">37.53</div></div>
<div class="a" style="left:1523px;top:190.4px;font-family:'Liberation Serif',serif;font-weight:bold;font-size:12px;line-height:14px;color:#e0e0e0;transform:scaleX(.75);transform-origin:0 0">%</div>
<div class="a" style="left:1326px;top:219.7px;font-family:'Liberation Serif',serif;font-weight:bold;font-size:14.500px;line-height:16px;color:#e4e4e4;transform:scaleX(.74);transform-origin:0 0">K</div>
<div class="a" style="left:1349px;top:223.7px;width:123.500px;height:6px;background:linear-gradient(90deg,#c4b08c,#8a7c64 35%,#40382e 70%,#0a0806 92%,#000);box-shadow:0 0 0 1px #333"></div>
<svg class="a" style="left:1354.8px;top:229.9px" width="11" height="9" viewBox="0 0 11 9"><path d="M5.500 0.300C3.500 2 .8 3.500 .8 6v2.200h9.400V6c0-2.500-2.700-4-4.700-5.700z" fill="#dedede" stroke="#2a2a2a" stroke-width=".900"/></svg>
<div class="a" style="left:1481px;top:216.5px;width:39px;height:20px;background:#a6a6a6;box-shadow:0 0 0 1px #383838;overflow:hidden"><div class="a" style="left:3px;top:1.500px;font-family:'Liberation Mono',monospace;font-size:13px;line-height:16px;color:#585858;white-space:nowrap;letter-spacing:-.3px">8.83</div></div>
<div class="a" style="left:1523px;top:220.7px;font-family:'Liberation Serif',serif;font-weight:bold;font-size:12px;line-height:14px;color:#e0e0e0;transform:scaleX(.75);transform-origin:0 0">%</div>
<div class="a" style="left:1270px;top:281px;width:264px;height:228px;background:#2e2e2e"></div>
<div class="a" style="left:1271.500px;top:282px;width:261px;height:225.500px;background:linear-gradient(180deg,rgba(255,255,255,1) 0%,rgba(255,255,255,.88) 8%,rgba(255,255,255,.6) 20%,rgba(255,255,255,.3) 33%,rgba(255,255,255,.08) 45%,rgba(255,255,255,0) 52%,rgba(0,0,0,0) 58%,rgba(0,0,0,.15) 70%,rgba(0,0,0,.45) 82%,rgba(0,0,0,.8) 92%,#000 99%),linear-gradient(90deg,#ff0010 0%,#ff3000 4%,#ffa800 10%,#fff000 17%,#b0d810 24%,#38b030 31%,#10a040 39%,#10a898 46%,#30b0d8 53%,#2078c8 60%,#1c2ca0 66%,#1c1490 70%,#70109a 76%,#d0189a 82%,#f01888 88%,#ff1050 95%,#ff0018 100%)"></div>
<div class="a" style="left:1262px;top:519px;width:287px;height:147px;background:#4a4a4a"></div>
<div class="a" style="left:1262px;top:519px;width:287px;height:23px;background:#383838"></div>
<div class="a" style="left:1405px;top:519px;width:92px;height:24px;background:#4a4a4a"></div>
<div class="a" style="left:1310px;top:520px;width:1px;height:22px;background:#2c2c2c"></div>
<div class="a" style="left:1357px;top:520px;width:1px;height:22px;background:#2c2c2c"></div>
<div class="a" style="left:1404px;top:520px;width:1px;height:22px;background:#2c2c2c"></div>
<div class="a" style="left:1497px;top:520px;width:1px;height:22px;background:#2c2c2c"></div>
<div class="t" style="left:1270.5px;top:522.5px;font-size:15px;height:18.0px;color:#8c8c8c;"><span>色板</span></div>
<div class="t" style="left:1318.5px;top:522.5px;font-size:15px;height:18.0px;color:#8c8c8c;"><span>画笔</span></div>
<div class="t" style="left:1365.5px;top:522.5px;font-size:15px;height:18.0px;color:#8c8c8c;"><span>图层</span></div>
<div class="t" style="left:1414.5px;top:522.5px;font-size:14.7px;height:17.64px;color:#ececec;"><span>路径查找器</span></div>
<svg class="a" style="left:1532px;top:526px" width="17" height="10" viewBox="0 0 17 10"><path d="M0 1.500h5l-2.500 3z" fill="#cfcfcf"/><path d="M7 1h10M7 4.500h10M7 8h10" stroke="#cfcfcf" stroke-width="1.500"/></svg>
<div class="t" style="left:1269.5px;top:549.5px;font-size:14px;height:16.8px;color:#e8e8e8;font-weight:bold;"><span>形状模式</span><span style="margin-left:4.9px;margin-right:4.2px;font-weight:bold">:</span></div>
<div class="t" style="left:1269.5px;top:608px;font-size:14px;height:16.8px;color:#e8e8e8;font-weight:bold;"><span>路径查找器</span><span style="margin-left:4.9px;margin-right:4.2px;font-weight:bold">:</span></div>
<svg class="a" style="left:1276.6px;top:577.3px" width="17" height="17" viewBox="0 0 17 17"><path d="M1.500 1.500h9v4h5v10h-10v-5h-4z" fill="#9a9a9a" stroke="#d4d4d4" stroke-width="1.300"/><path d="M5.500 10.500v-5h5" fill="none" stroke="#666" stroke-width="1"/></svg>
<svg class="a" style="left:1320.7px;top:577.3px" width="17" height="17" viewBox="0 0 17 17"><path d="M1.500 1.500h9v4h-5v5h-4z" fill="#9a9a9a" stroke="#d4d4d4" stroke-width="1.300"/><rect x="5.500" y="5.500" width="10" height="10" fill="none" stroke="#d4d4d4" stroke-width="1.300"/></svg>
<svg class="a" style="left:1364.4px;top:577.3px" width="17" height="17" viewBox="0 0 17 17"><rect x="1.500" y="1.500" width="9" height="9" fill="none" stroke="#d4d4d4" stroke-width="1.300"/><rect x="5.500" y="5.500" width="10" height="10" fill="none" stroke="#d4d4d4" stroke-width="1.300"/><rect x="6" y="6" width="4.500" height="4.500" fill="#bcbcbc"/></svg>
<svg class="a" style="left:1408.4px;top:577.3px" width="17" height="17" viewBox="0 0 17 17"><path d="M1.500 1.500h9v4h5v10h-10v-5h-4z" fill="#9a9a9a" stroke="#d4d4d4" stroke-width="1.300"/><rect x="5.500" y="5.500" width="5" height="5" fill="#4a4a4a" stroke="#d4d4d4" stroke-width="1"/></svg>
<div class="a" style="left:1447.500px;top:575px;width:85.500px;height:21px;background:#525252;box-shadow:inset 0 0 0 1px #3a3a3a,inset 0 2px 0 #5a5a5a"></div>
<div class="t" style="left:1476px;top:577px;font-size:14px;height:16.8px;color:#787878;"><span>扩展</span></div>
<svg class="a" style="left:1279.4px;top:634.7px" width="19" height="19" viewBox="0 0 19 19"><rect x="1" y="1" width="8" height="8" fill="#9a9a9a" stroke="#d4d4d4"/><rect x="5" y="5" width="8" height="8" fill="#777" stroke="#d4d4d4"/><rect x="9.500" y="9.500" width="8" height="8" fill="#9a9a9a" stroke="#d4d4d4"/></svg>
<svg class="a" style="left:1324.6px;top:634.7px" width="19" height="19" viewBox="0 0 19 19"><rect x="1" y="1" width="7" height="7" fill="#d4d4d4"/><rect x="4.500" y="4.500" width="8" height="8" fill="#bdbdbd" stroke="#4a4a4a"/><rect x="9" y="9" width="9" height="9" fill="#d4d4d4" stroke="#4a4a4a"/></svg>
<svg class="a" style="left:1369.0px;top:634.7px" width="19" height="19" viewBox="0 0 19 19"><rect x="1" y="1" width="11" height="11" fill="#d4d4d4"/><rect x="8" y="8" width="10" height="10" fill="#d4d4d4" stroke="#4a4a4a" stroke-width="1.200"/></svg>
<svg class="a" style="left:1414.2px;top:634.7px" width="19" height="19" viewBox="0 0 19 19"><rect x="1.500" y="1.500" width="10" height="10" fill="#5e5e5e" stroke="#6a6a6a"/><rect x="7.500" y="7.500" width="10" height="10" fill="#6a6a6a" stroke="#747474"/><rect x="7.500" y="7.500" width="4.500" height="4.500" fill="#d4d4d4"/></svg>
<svg class="a" style="left:1460.2px;top:634.7px" width="19" height="19" viewBox="0 0 19 19"><rect x="1.500" y="1.500" width="9" height="9" fill="none" stroke="#d4d4d4" stroke-width="1.300" stroke-dasharray="6 2"/><rect x="8" y="8" width="9.500" height="9.500" fill="none" stroke="#d4d4d4" stroke-width="1.300"/></svg>
<svg class="a" style="left:1506.0px;top:634.7px" width="19" height="19" viewBox="0 0 19 19"><rect x="2" y="2" width="10" height="10" fill="#3a3a3a" stroke="#666"/><path d="M12.500 5.500h5v12h-12v-5h7z" fill="#d4d4d4"/></svg>
<div class="a" style="left:1262px;top:669px;width:287px;height:149px;background:#4a4a4a"></div>
<div class="a" style="left:1262px;top:669px;width:287px;height:21px;background:#363636"></div>
<div class="a" style="left:1262px;top:669px;width:64px;height:22px;background:#4a4a4a"></div>
<svg class="a" style="left:1267px;top:675px" width="9" height="13"><path d="M1 5l3.500-4 3.500 4M1 8l3.500 4 3.500-4" fill="none" stroke="#e0e0e0" stroke-width="1.500"/></svg>
<div class="t" style="left:1279px;top:673px;font-size:14px;height:16.8px;color:#e8e8e8;"><span>透明度</span></div>
<svg class="a" style="left:1532px;top:676px" width="17" height="10" viewBox="0 0 17 10"><path d="M0 1.500h5l-2.500 3z" fill="#cfcfcf"/><path d="M7 1h10M7 4.500h10M7 8h10" stroke="#cfcfcf" stroke-width="1.500"/></svg>
<div class="a" style="left:1271px;top:700.500px;width:189px;height:19.500px;background:#585858;box-shadow:0 0 0 1px #333"></div>
<div class="t" style="left:1287px;top:702px;font-size:13.5px;height:16.2px;color:#dcdcdc;"><span>正常</span></div>
<div class="a" style="left:1460px;top:700.500px;width:59px;height:19.500px;background:#a2a2a2;box-shadow:0 0 0 1px #333"></div>
<div class="a" style="left:1463px;top:702px;font-size:13px;line-height:16px;color:#2a2a2a;transform:scaleX(.9);transform-origin:0 0">100%</div>
<div class="a" style="left:1519px;top:700.500px;width:18px;height:19.500px;background:#585858;box-shadow:0 0 0 1px #333"></div><svg class="a" style="left:1525px;top:705px" width="7" height="10"><path d="M0 0v10l7-5z" fill="#e6e6e6"/></svg>
<svg class="a" style="left:1273px;top:747px" width="60" height="59" viewBox="0 0 60 59"><rect width="59.500" height="58.700" fill="#fff"/><path d="M2.500 14h57v14c0 10-13 18-28.500 18S2.500 38 2.500 28z" fill="#b4a282"/></svg>
<div class="a" style="left:1366px;top:745.500px;width:61px;height:61.500px;box-sizing:border-box;border:1px solid #8e8e8e"></div>
<div class="a" style="left:1437.500px;top:743.500px;width:82.500px;height:19px;background:#606060;box-shadow:inset 0 0 0 1px #3a3a3a,inset 0 2px 0 #707070"></div>
<div class="t" style="left:1451px;top:744.5px;font-size:14px;height:16.8px;color:#e4e4e4;"><span>制作蒙版</span></div>
<div class="a" style="left:1438px;top:777px;width:11px;height:10px;box-sizing:border-box;border:1px solid #383838;background:#444;border-radius:2px"></div>
<div class="t" style="left:1456px;top:774px;font-size:13.5px;height:16.2px;color:#6e6e6e;"><span>剪切</span></div>
<div class="a" style="left:1438px;top:799px;width:11px;height:11px;box-sizing:border-box;border:1px solid #383838;background:#444;border-radius:2px"></div>
<div class="t" style="left:1456px;top:796.5px;font-size:14px;height:16.8px;color:#888;"><span>反相蒙版</span></div>
<svg class="a" style="left:1262px;top:650px" width="287" height="168" viewBox="1262 650 287 168"><rect x="1321.500" y="678.800" width="140" height="25" rx="9" fill="#4a4a4a"/><ellipse cx="1317.500" cy="667.500" rx="9.300" ry="12.300" fill="#dadada"/><ellipse cx="1342" cy="669" rx="9.800" ry="11" fill="#dadada"/><ellipse cx="1298" cy="691" rx="9.300" ry="11.800" fill="#dadada"/><rect x="1275.400" y="696" width="7.200" height="24" fill="#e2e2e2"/><path d="M1300 720c2-10 9-24 19.500-26 10 2 17 14 22 26z" fill="#e2e2e2"/><path d="M1309 720c1-6 4-10 10-10s9 4 10 10" fill="none" stroke="#4a4a4a" stroke-width="3"/><rect x="1262" y="720" width="210" height="23.500" fill="#4a4a4a"/><rect x="1332.500" y="756.800" width="104.500" height="21.500" fill="#4a4a4a"/><path d="M1383 778.500c3 8 10 12 15 12s11-4 13-12h-6c-1.500 4-4 6-7 6s-7-2-8.500-6z" fill="#c8c8c8"/><rect x="1353" y="753" width="4" height="2.500" rx="1" fill="#e0e0e0"/><rect x="1374.500" y="753" width="4" height="2.500" rx="1" fill="#e0e0e0"/></svg>
<div class="a" style="left:1262px;top:694px;width:199px;height:26px;overflow:hidden;clip-path:polygon(0 0,59px 0,59px 9.400px,199px 9.400px,199px 26px,0 26px)"><div class="t" style="left:82px;top:-1px;font-size:29px;height:34.8px;color:#e4e4e4;font-weight:bold;"><span>百度经验</span></div></div>
<div class="a" style="left:1270px;top:745px;width:62.500px;height:40px;overflow:hidden"><svg class="a" style="left:2.3px;top:-1px;" width="64.2" height="42.9"><text stroke="#f6f6f6" stroke-width=".9" x="0" y="33" font-family="'Liberation Sans',sans-serif" font-size="33" font-weight="normal" fill="#f6f6f6" textLength="64.2" lengthAdjust="spacingAndGlyphs">an.b</text></svg></div>
<div class="a" style="left:94px;top:800px;width:1165px;height:18px;background:#4a4a4a"></div>
<div class="a" style="left:94px;top:800px;width:1165px;height:1px;background:#2c2c2c"></div>
<div class="a" style="left:196px;top:803px;width:22px;height:15px;background:#a2a2a2"></div>
<div class="a" style="left:206px;top:803.500px;font-family:'Liberation Serif',serif;font-size:14px;line-height:17px;color:#1c1c1c">7</div>
<div class="a" style="left:218.5px;top:802px;width:18px;height:16px;background:#5a5a5a;box-shadow:inset 0 0 0 1px #383838"></div><svg class="a" style="left:223.5px;top:809px" width="8" height="6"><path d="M0 0h8l-4 5.500z" fill="#e6e6e6"/></svg>
<svg class="a" style="left:246px;top:806px" width="160" height="12" viewBox="246 806 160 12"><path d="M250 808v8M257.500 808v8l-6-4zM277 808v8l-6-4z" fill="#666" stroke="#666" stroke-width="1.200"/><path d="M373 808v8l6-4zM389 808v8l6-4zM396.500 808v8" fill="#666" stroke="#666" stroke-width="1.200"/></svg>
<div class="a" style="left:290px;top:803px;width:49px;height:15px;background:#a2a2a2"></div>
<div class="a" style="left:293px;top:803.500px;font-family:'Liberation Serif',serif;font-size:14px;line-height:17px;color:#1c1c1c">1</div>
<div class="a" style="left:339px;top:802px;width:18px;height:16px;background:#5a5a5a;box-shadow:inset 0 0 0 1px #383838"></div><svg class="a" style="left:344.0px;top:809px" width="8" height="6"><path d="M0 0h8l-4 5.500z" fill="#e6e6e6"/></svg>
<div class="a" style="left:409px;top:802px;width:1px;height:16px;background:#3a3a3a"></div>
<div class="t" style="left:502px;top:806.5px;font-size:14px;height:16.8px;color:#d4d4d4;"><span>直接选择</span></div>
<svg class="a" style="left:661px;top:806px" width="7" height="10"><path d="M0 0v10l6.500-5z" fill="#e0e0e0"/></svg>
<div class="a" style="left:676px;top:801px;width:564px;height:17px;background:#353535"></div>
<svg class="a" style="left:681px;top:805px" width="9" height="12"><path d="M8.500 0v12L0 6z" fill="#e8e8e8"/></svg>
<svg class="a" style="left:1224.500px;top:805px" width="9" height="12"><path d="M0 0v12l8.500-6z" fill="#e8e8e8"/></svg>
<div class="a" style="left:938.500px;top:801px;width:18px;height:17px;background:#9c9c9c"></div>
<div class="a" style="left:1240px;top:800px;width:19px;height:18px;background:#4a4a4a"></div>
<div class="a" style="left:4px;top:790.500px;width:198.500px;height:28px;background:#fdfdfd;border-radius:3px 3px 0 0"></div>
<svg class="a" style="left:3px;top:786px" width="36" height="32" viewBox="0 0 36 32"><path d="M2 9L29 1.500c2-.5 3.500.5 4 2.500l3 24c.2 2-1 3.500-3 4L8 32c-2 .3-3.500-1-4-3L.5 12.500C0 10.500.500 9.500 2 9z" fill="#2fb34a"/><path d="M27 10.500c-4-3-13-3-16 .5-3.500 4 1 6.500 6 7.500 6 1.200 6 3 3.500 4.500-3 1.500-8 .5-11.500-2l-2 4c4 3 13 4 17.500 1.500 5-3 4-8.500-3-10-6-1.300-6.500-2.500-4.500-3.800 2-1.200 6-.5 8.500 1.300z" fill="#fff"/></svg>
<div class="t" style="left:45px;top:794px;font-size:19px;height:22.8px;color:#3b4160;font-weight:bold;"><span>英</span></div>
<svg class="a" style="left:72px;top:795px" width="19" height="19" viewBox="0 0 19 19"><path d="M11 1c5 3.500 6 11.500 0 15.500-3.500 2.300-8 1.800-10.500-.5 3.500.8 7.500-1.200 9.300-4.800S12 4 11 1z" fill="#3b4160"/></svg>
<svg class="a" style="left:100px;top:796px" width="14" height="16" viewBox="0 0 14 16"><circle cx="3" cy="3" r="2.200" fill="#3b4160"/><path d="M8.500 7.500c2.500-.5 4 1.500 3.500 3.500-.300 1.500-1.500 3-3 3.500 1-1 1.500-2 1.200-3-1.200.3-2.500-.5-2.700-1.800-.2-1 .2-2 1-2.200z" fill="#3b4160"/></svg>
<svg class="a" style="left:124.500px;top:797px" width="20" height="14" viewBox="0 0 20 14"><rect x=".8" y=".8" width="18.400" height="12.400" rx="2" fill="none" stroke="#3b4160" stroke-width="1.600"/><path d="M3.500 4.300h13M3.500 7h13" stroke="#3b4160" stroke-width="1.500" stroke-dasharray="1.700 1.100"/><path d="M5.500 10h9" stroke="#3b4160" stroke-width="1.500"/></svg>
<svg class="a" style="left:154px;top:794px" width="15" height="20" viewBox="0 0 15 20"><circle cx="7.500" cy="5" r="4" fill="#cfe4e1"/><path d="M.5 17c0-5 3-7.500 7-7.500s7 2.500 7 7.500c-2 2-12 2-14 0z" fill="#cfe4e1"/></svg>
<svg class="a" style="left:177.500px;top:795px" width="20" height="20" viewBox="0 0 20 20"><path d="M13 1c2-1 4.500-.5 6 .5l-3.500 3.500.5 2.500 2.500.5L19.500 5c1 2 .5 4.500-1 6s-4 1.800-5.500 1L6 19c-1 1-2.800 1-3.800 0s-1-2.800 0-3.800L9 8.500C8.200 6 9 3 11 1.500z" fill="#3b4160"/></svg>
</body></html>
